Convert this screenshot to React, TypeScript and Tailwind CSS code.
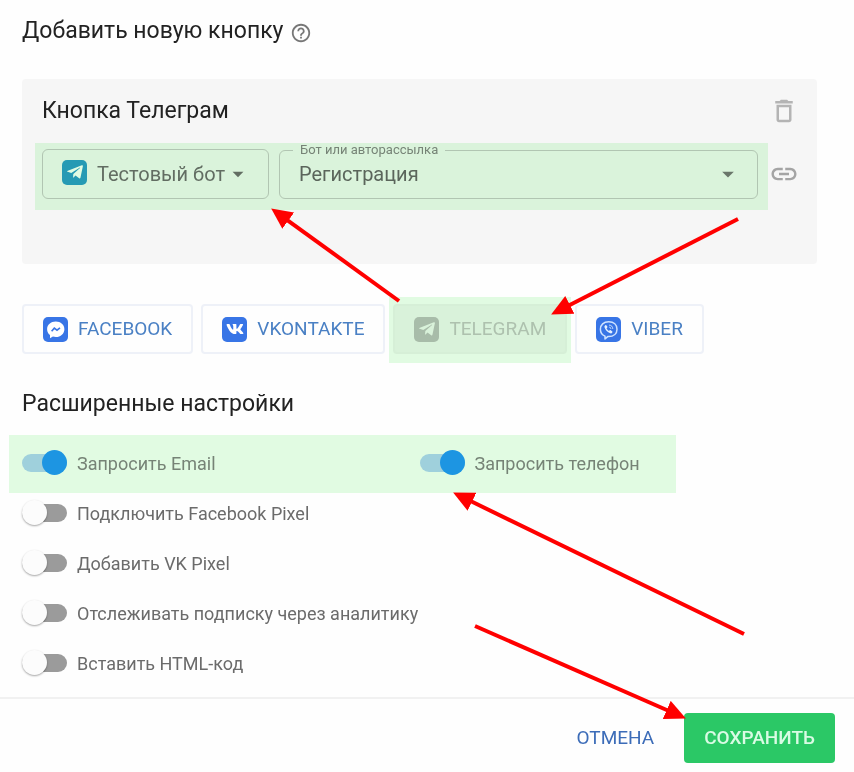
import type { ReactNode } from "react";
import clsx from "clsx";
import { FaTelegramPlane, FaVk } from "react-icons/fa";
import { MdArrowDropDown, MdDeleteOutline, MdHelpOutline, MdLink } from "react-icons/md";

const heading = "text-[23px] leading-7";

const channelButton =
  "flex h-[50px] items-center gap-[10px] rounded border-2 px-[19px] text-[19px]";

function IconTile({ className, children }: { className: string; children: ReactNode }) {
  return (
    <span
      className={clsx(
        "flex size-[25px] shrink-0 items-center justify-center rounded-[5px]",
        className,
      )}
    >
      {children}
    </span>
  );
}

function MessengerIcon() {
  return (
    <svg viewBox="0 0 25 25" className="size-[25px]" aria-hidden="true">
      <path
        d="M12.8 4.6c-5 0-8.7 3.3-8.7 7.6 0 2.5 1.1 4.5 2.9 5.9v3.1l2.9-1.6c.9.3 1.9.4 2.9.4 4.9 0 8.6-3.4 8.6-7.8s-3.7-7.6-8.6-7.6z"
        fill="#fff"
      />
      <path
        d="M8.6 14.2l2.7-3 2.7 2 3-2.4"
        fill="none"
        stroke="#3875e6"
        strokeWidth="1.6"
      />
    </svg>
  );
}

function ViberIcon() {
  return (
    <svg viewBox="0 0 25 25" className="size-[25px]" fill="none" aria-hidden="true">
      <path
        d="M9 19.1C6 17.9 4.4 15.4 4.4 12.2c0-4.4 3.2-7.4 8.3-7.4s8.3 3 8.3 7.4-3.2 7.4-8.3 7.4h-1L9 22z"
        stroke="#cfe3ff"
        strokeWidth="1.5"
        strokeLinejoin="round"
      />
      <path
        d="M9.4 8.3c-.8.5-1.2 1.2-.9 2 1 3 2.9 5 5.8 6 .8.3 1.5-.1 2-.9.3-.5.2-.9-.2-1.2l-1.4-1c-.4-.3-.8-.2-1.1.1l-.5.6c-1.3-.6-2.1-1.5-2.6-2.7l.6-.5c.4-.3.4-.7.2-1.1l-.9-1.2c-.3-.4-.6-.4-1-.1z"
        fill="#e6f1ff"
      />
      <path d="M13.1 8.1c2.3.1 3.6 1.5 3.7 3.8M13.3 10.2c1 .1 1.5.6 1.6 1.6" stroke="#cfe3ff" />
    </svg>
  );
}

function Toggle({ label, on = false }: { label: string; on?: boolean }) {
  return (
    <label
      className={clsx(
        "flex h-[50px] items-center gap-[10px] text-[18px]",
        on ? "text-[#858585]" : "text-[#6b6b6b]",
      )}
    >
      <input
        type="checkbox"
        role="switch"
        defaultChecked={on}
        className="relative h-[18px] w-[45px] shrink-0 appearance-none rounded-full bg-[#9b9b9b] before:absolute before:-top-1 before:left-0 before:size-[25px] before:rounded-full before:bg-[#fcfcfc] before:shadow-[0_1px_2px_rgba(0,0,0,0.35)] checked:bg-[#b4d3f8] checked:before:left-5 checked:before:bg-[#2097fe] checked:before:shadow-none"
      />
      {label}
    </label>
  );
}

function Highlight({ className }: { className: string }) {
  return (
    <div
      className={clsx("pointer-events-none absolute bg-[#e2fce3] mix-blend-multiply", className)}
    />
  );
}

const arrows = [
  { x1: 399, y1: 301, x2: 272, y2: 209 },
  { x1: 738, y1: 219, x2: 552, y2: 314 },
  { x1: 744, y1: 634, x2: 454, y2: 493 },
  { x1: 475, y1: 626, x2: 685, y2: 718 },
];

function Arrows() {
  return (
    <svg
      className="pointer-events-none absolute top-0 left-0 h-[772px] w-[854px]"
      viewBox="0 0 854 772"
      aria-hidden="true"
    >
      <defs>
        <marker
          id="head"
          markerUnits="userSpaceOnUse"
          markerWidth="21"
          markerHeight="20"
          refX="20"
          refY="10"
          orient="auto"
        >
          <path d="M0 0L21 10L0 20z" fill="#f00" />
        </marker>
      </defs>
      {arrows.map((a) => {
        // stop the shaft inside the head so that the tip stays sharp
        const len = Math.hypot(a.x2 - a.x1, a.y2 - a.y1);
        const dx = (a.x2 - a.x1) / len;
        const dy = (a.y2 - a.y1) / len;
        return (
          <g key={a.x1}>
            <line
              x1={a.x1}
              y1={a.y1}
              x2={a.x2 - dx * 15}
              y2={a.y2 - dy * 15}
              stroke="#f00"
              strokeWidth="4"
            />
            <path d={`M${a.x1} ${a.y1}L${a.x2} ${a.y2}`} markerEnd="url(#head)" />
          </g>
        );
      })}
    </svg>
  );
}

export default function App() {
  return (
    <div className="relative flex min-h-screen flex-col overflow-hidden bg-[#fefefe] font-['Roboto',sans-serif] text-[#222]">
      <main className="flex-1 pt-[17px] pr-[37px] pb-2 pl-[22px]">
        <div className="flex items-center gap-[6px]">
          <h1 className={heading}>Добавить новую кнопку</h1>
          <button type="button" aria-label="Справка" className="mt-1 text-[#777]">
            <MdHelpOutline className="size-[22px]" />
          </button>
        </div>

        <section className="mt-[34px] rounded bg-[#f6f6f6] pt-[18px] pr-[18px] pb-[65px] pl-5">
          <div className="flex h-7 items-center justify-between">
            <h2 className={heading}>Кнопка Телеграм</h2>
            <button type="button" aria-label="Удалить" className="text-[#b4b4b4]">
              <MdDeleteOutline className="size-[30px]" />
            </button>
          </div>

          <div className="mt-6 flex items-center gap-[11px]">
            <div className="relative flex flex-1 gap-[10px]">
              <button
                type="button"
                className="flex h-[50px] w-[227px] shrink-0 items-center rounded-md border border-[#c8c8c8] pl-[19px] text-[20px] text-[#6e6e6e]"
              >
                <IconTile className="mr-[10px] mb-1 bg-[#2a9cca] text-white">
                  <FaTelegramPlane className="size-[18px]" />
                </IconTile>
                Тестовый бот
                <MdArrowDropDown className="size-[26px]" />
              </button>

              <div className="relative h-[50px] flex-1">
                <fieldset className="pointer-events-none absolute inset-x-0 -top-[6px] bottom-0 rounded-md border border-[#c8c8c8] px-[13px]">
                  <legend className="px-[7px] text-[13px] leading-[14px] text-[#858585]">
                    <label htmlFor="flow">Бот или авторассылка</label>
                  </legend>
                </fieldset>
                <select
                  id="flow"
                  className="h-full w-full appearance-none bg-transparent px-5 text-[20px] text-[#666]"
                >
                  <option>Регистрация</option>
                </select>
                <MdArrowDropDown className="pointer-events-none absolute top-[11px] right-4 size-7 text-[#777]" />
              </div>
              <Highlight className="-top-[6px] -right-[10px] -bottom-[11px] -left-[7px]" />
            </div>
            <button type="button" aria-label="Ссылка" className="text-[#a4a4a4]">
              <MdLink className="size-[30px]" />
            </button>
          </div>
        </section>

        <div className="mt-10 flex flex-wrap gap-2">
          <button
            type="button"
            className={clsx(channelButton, "border-[#eef1f8] text-[#4a80c4]")}
          >
            <IconTile className="bg-[#3875e6]">
              <MessengerIcon />
            </IconTile>
            FACEBOOK
          </button>
          <button
            type="button"
            className={clsx(channelButton, "border-[#eef1f8] text-[#4a80c4]")}
          >
            <IconTile className="bg-[#3875e6] text-white">
              <FaVk className="size-[18px]" />
            </IconTile>
            VKONTAKTE
          </button>
          <div className="relative">
            <button
              type="button"
              disabled
              className={clsx(channelButton, "border-[#f2f2f2] bg-[#f5f5f5] text-[#c4c4c4]")}
            >
              <IconTile className="bg-[#bebebe] text-[#f5f5f5]">
                <FaTelegramPlane className="size-[18px]" />
              </IconTile>
              TELEGRAM
            </button>
            <Highlight className="-top-[7px] -right-1 -bottom-[9px] -left-1" />
          </div>
          <button
            type="button"
            className={clsx(channelButton, "border-[#eef1f8] text-[#4a80c4]")}
          >
            <IconTile className="bg-[#3875e6]">
              <ViberIcon />
            </IconTile>
            VIBER
          </button>
        </div>

        <h2 className={clsx(heading, "mt-9")}>Расширенные настройки</h2>

        <div className="mt-5">
          <div className="relative grid grid-cols-2">
            <Toggle label="Запросить Email" on />
            <Toggle label="Запросить телефон" on />
            <Highlight className="-top-[3px] right-[141px] -bottom-[5px] -left-[13px]" />
          </div>
          <Toggle label="Подключить Facebook Pixel" />
          <Toggle label="Добавить VK Pixel" />
          <Toggle label="Отслеживать подписку через аналитику" />
          <Toggle label="Вставить HTML-код" />
        </div>
      </main>

      <footer className="flex justify-end gap-[10px] border-t-2 border-[#f1f1f1] pt-[14px] pr-[19px] pb-[9px]">
        <button type="button" className="h-[50px] px-5 text-[19px] text-[#3c6cb8]">
          ОТМЕНА
        </button>
        <button
          type="button"
          className="h-[50px] rounded bg-[#2bc866] px-5 text-[19px] font-medium text-[#d9fbe4]"
        >
          СОХРАНИТЬ
        </button>
      </footer>

      <Arrows />
    </div>
  );
}
